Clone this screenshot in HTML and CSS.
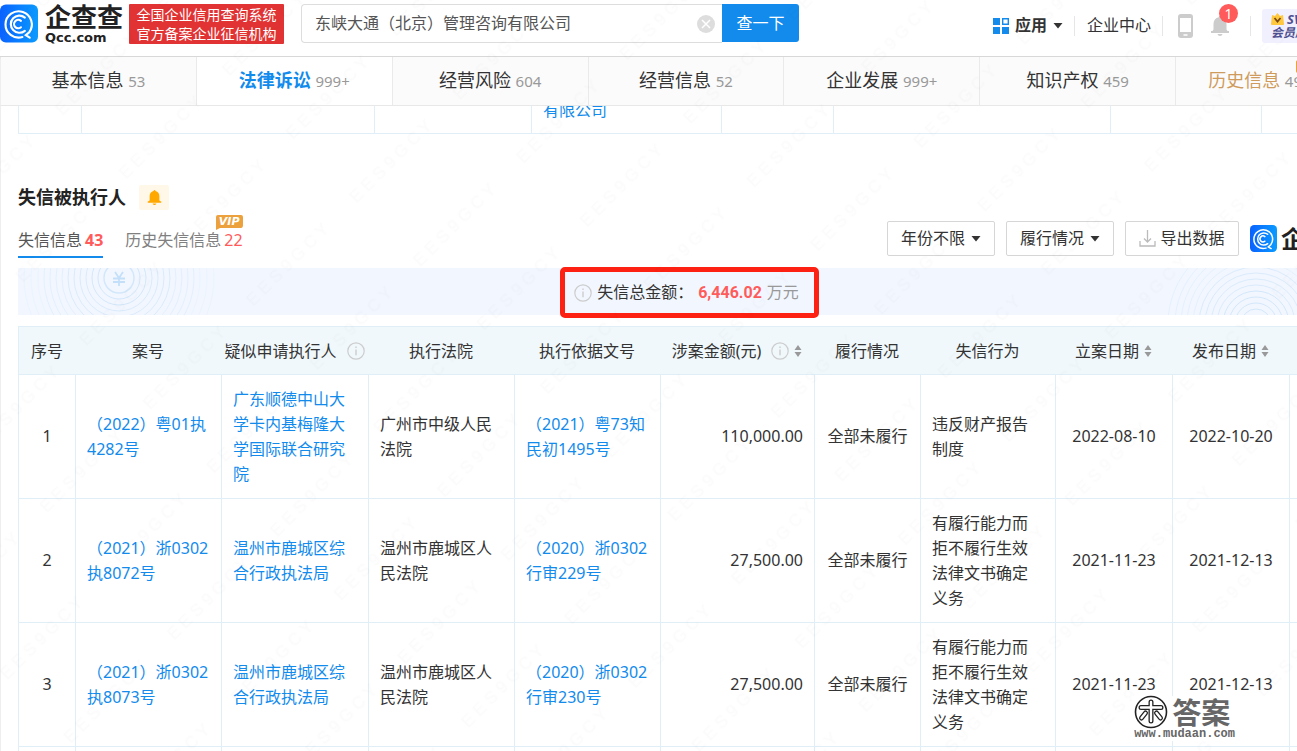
FILE: index.html
```html
<!DOCTYPE html>
<html lang="zh-CN">
<head>
<meta charset="utf-8">
<title>企查查</title>
<link rel="stylesheet" href="styles.css">
</head>
<body>
<svg class="defs" aria-hidden="true">
  <defs>
    <linearGradient id="blue" x1="0" y1="0" x2="1" y2="0"><stop offset="0" stop-color="#0a62ff"/><stop offset="1" stop-color="#0a9bff"/></linearGradient>
    <symbol id="qcc" viewBox="0 0 39 39">
      <rect width="39" height="39" rx="6" fill="url(#blue)"/>
      <g fill="none" stroke="#fff" stroke-width="2.2" stroke-linecap="round">
        <path d="M23 33.400A13.500 13.500 0 1 1 30 28.500L26.500 31.500L30.500 34"/>
        <path d="M25.500 27A8.800 8.800 0 1 1 25.500 13.400"/>
        <path d="M21.500 23.400A4.300 4.300 0 1 1 21.500 16.800"/>
      </g>
    </symbol>
    <symbol id="info" viewBox="0 0 18 18">
      <circle cx="9" cy="9" r="8.2" fill="none" stroke="#ccc" stroke-width="1.2"/>
      <path d="M9 7.5V13.3M9 4.6V6" stroke="#ccc" stroke-width="1.4"/>
    </symbol>
    <symbol id="sort" viewBox="0 0 8 12">
      <path d="M4 0L7.5 5H.5zM4 12L.5 7h7z" fill="#999"/>
    </symbol>
    <symbol id="caret" viewBox="0 0 10 6"><path d="M.5 0h9L5 5.5z" fill="#333"/></symbol>
    <symbol id="bell" viewBox="0 0 20 20">
      <path d="M10 0c.8 0 1.3.5 1.3 1.3C14.500 2 16.500 4.500 16.500 8v5.500l1 1.500H19v2H1v-2h1.500l1-1.500V8c0-3.500 2-6 5.200-6.700C8.700.500 9.200 0 10 0zM7.500 18h5c-.3 1.200-1.200 2-2.500 2s-2.200-.8-2.500-2z" fill="currentColor"/>
    </symbol>
  </defs>
</svg>

<div class="page">
  <header class="top">
    <a class="brand" href="#" aria-label="企查查">
      <svg class="brand-icon"><use href="#qcc"/></svg>
      <span class="brand-text"><b class="brand-name">企查查</b><b class="brand-url">Qcc.com</b></span>
    </a>
    <p class="slogan">全国企业信用查询系统<br>官方备案企业征信机构</p>
    <form class="search">
      <div class="search-box">
        <input class="search-input" type="text" aria-label="搜索企业" value="东峡大通（北京）管理咨询有限公司">
        <button class="clear" type="button" aria-label="清空">
          <svg width="18" height="18" viewBox="0 0 18 18"><circle cx="9" cy="9" r="9" fill="#ddd"/><path d="M5 5l8 8M13 5l-8 8" stroke="#fff" stroke-width="1.500"/></svg>
        </button>
      </div>
      <button class="search-btn" type="button">查一下</button>
    </form>
    <nav class="tools">
      <a class="tool apps" href="#">
        <svg width="16" height="16" viewBox="0 0 16 16"><path d="M0 0h7v7H0zM0 9h7v7H0zM9 9h7v7H9z" fill="#128bed"/><path d="M9.700.700h5.600v5.600H9.700z" fill="none" stroke="#128bed" stroke-width="1.400"/></svg>
        <b>应用</b>
        <svg class="caret"><use href="#caret"/></svg>
      </a>
      <a class="tool center" href="#">企业中心</a>
      <div class="tool icons">
        <a href="#" aria-label="手机版"><svg class="phone" viewBox="0 0 15 24"><rect width="15" height="24" rx="3" fill="#ccc"/><path d="M2 4h11v14H2z" fill="#fff"/><path d="M5.500 21h4" stroke="#fff" stroke-width="1.500"/></svg></a>
        <a class="notice" href="#" aria-label="消息"><svg class="notice-bell"><use href="#bell"/></svg><span class="count">1</span></a>
      </div>
      <a class="svip" href="#">
        <span class="svip-top"><svg width="13" height="12" viewBox="0 0 13 12"><path d="M1 2l3 1 2.500-3L9 3l3-1 1 9q0 1-1 1H1q-1 0-1-1z" fill="#ffc83d"/><path d="M3.500 5L6.500 8.500 9.500 5" fill="none" stroke="#7a4a10" stroke-width="1.800"/></svg>SVIP</span>
        <span>会员服务</span>
      </a>
    </nav>
  </header>

  <nav class="tabs">
    <a class="tab" href="#">基本信息 <span class="num">53</span></a>
    <a class="tab active" href="#">法律诉讼 <span class="num">999+</span></a>
    <a class="tab" href="#">经营风险 <span class="num">604</span></a>
    <a class="tab" href="#">经营信息 <span class="num">52</span></a>
    <a class="tab" href="#">企业发展 <span class="num">999+</span></a>
    <a class="tab" href="#">知识产权 <span class="num">459</span></a>
    <a class="tab history" href="#">历史信息 <span class="num">49</span><i class="flag"></i></a>
  </nav>

  <main class="content">
    <div class="previous">
      <table class="grid">
        <colgroup><col class="p1"><col class="p2"><col class="p3"><col class="p4"><col class="p5"><col class="p6"><col class="p7"><col></colgroup>
        <tbody><tr><td></td><td></td><td></td><td><a href="#">有限公司</a></td><td></td><td></td><td></td><td></td></tr></tbody>
      </table>
    </div>

    <div class="title">
      <h2>失信被执行人</h2>
      <button class="watch" type="button" aria-label="监控"><svg class="watch-bell"><use href="#bell"/></svg></button>
    </div>

    <div class="bar">
      <nav class="subtabs">
        <a class="subtab current" href="#">失信信息<b>43</b></a>
        <a class="subtab" href="#">历史失信信息<em>22</em>
          <span class="vip"><svg class="vip-bg" viewBox="0 0 27 15" preserveAspectRatio="none"><path d="M2 0H25q2 0 2 2V10q0 3-2 3H4L0 15V2q0-2 2-2z" fill="#eda13d"/></svg><span class="vip-text">VIP</span></span>
        </a>
      </nav>
      <div class="filters">
        <button class="filter" type="button">年份不限<svg class="caret"><use href="#caret"/></svg></button>
        <button class="filter" type="button">履行情况<svg class="caret"><use href="#caret"/></svg></button>
        <button class="filter export" type="button"><svg width="17" height="17" viewBox="0 0 17 17" fill="none" stroke="#bbb" stroke-width="1.300"><path d="M8.500 0v12M5 8.500l3.500 3.500L12 8.500M1 11v5h15v-5"/></svg>导出数据</button>
        <span class="mini-brand"><svg class="mini-icon"><use href="#qcc"/></svg><b>企查查</b></span>
      </div>
    </div>

    <div class="banner">
      <svg class="rings left" viewBox="0 0 220 47" fill="none" stroke="#d3e7fb">
        <circle cx="101" cy="10" r="15" stroke-width="1.500"/><circle cx="101" cy="10" r="21"/><circle cx="101" cy="10" r="27"/>
        <g opacity=".75"><circle cx="101" cy="10" r="33"/><circle cx="101" cy="10" r="39"/><circle cx="101" cy="10" r="45"/><circle cx="101" cy="10" r="51"/></g>
        <g opacity=".45"><circle cx="101" cy="10" r="57"/><circle cx="101" cy="10" r="63"/><circle cx="101" cy="10" r="69"/><circle cx="101" cy="10" r="75"/></g>
        <g opacity=".2"><circle cx="101" cy="10" r="81"/><circle cx="101" cy="10" r="88"/><circle cx="101" cy="10" r="95"/></g>
        <path d="M97 4l4 6 4-6M95 10.500h12M95 14h12M101 10v8" stroke="#c3dffa" stroke-width="1.800"/>
      </svg>
      <div class="total"><svg class="info"><use href="#info"/></svg><span>失信总金额：</span><strong>6,446.02</strong><span class="unit">万元</span></div>
      <svg class="rings right" viewBox="0 0 190 47" fill="none" stroke="#d3e7fb">
        <circle cx="92" cy="56" r="15"/><circle cx="92" cy="56" r="21"/><circle cx="92" cy="56" r="27"/><circle cx="92" cy="56" r="33"/>
        <g opacity=".75"><circle cx="92" cy="56" r="39"/><circle cx="92" cy="56" r="45"/><circle cx="92" cy="56" r="51"/><circle cx="92" cy="56" r="57"/></g>
        <g opacity=".4"><circle cx="92" cy="56" r="63"/><circle cx="92" cy="56" r="69"/><circle cx="92" cy="56" r="75"/><circle cx="92" cy="56" r="81"/><circle cx="92" cy="56" r="88"/></g>
      </svg>
    </div>

    <table class="grid records">
      <colgroup><col class="c1"><col class="c2"><col class="c3"><col class="c4"><col class="c5"><col class="c6"><col class="c7"><col class="c8"><col class="c9"><col class="c10"><col></colgroup>
      <thead>
        <tr>
          <th>序号</th><th>案号</th>
          <th><span class="th">疑似申请执行人<svg class="info"><use href="#info"/></svg></span></th>
          <th>执行法院</th><th>执行依据文号</th>
          <th><span class="th">涉案金额(元)<svg class="info"><use href="#info"/></svg><svg class="sort"><use href="#sort"/></svg></span></th>
          <th>履行情况</th><th>失信行为</th>
          <th><span class="th">立案日期<svg class="sort"><use href="#sort"/></svg></span></th>
          <th><span class="th">发布日期<svg class="sort"><use href="#sort"/></svg></span></th>
          <th></th>
        </tr>
      </thead>
      <tbody>
        <tr>
          <td class="mid">1</td><td><a href="#">（2022）粤01执4282号</a></td><td><a href="#">广东顺德中山大学卡内基梅隆大学国际联合研究院</a></td><td>广州市中级人民法院</td><td><a href="#">（2021）粤73知民初1495号</a></td><td class="amount">110,000.00</td><td class="mid">全部未履行</td><td class="conduct">违反财产报告制度</td><td class="mid">2022-08-10</td><td class="mid">2022-10-20</td><td></td>
        </tr>
        <tr>
          <td class="mid">2</td><td><a href="#">（2021）浙0302执8072号</a></td><td><a href="#">温州市鹿城区综合行政执法局</a></td><td>温州市鹿城区人民法院</td><td><a href="#">（2020）浙0302行审229号</a></td><td class="amount">27,500.00</td><td class="mid">全部未履行</td><td class="conduct">有履行能力而拒不履行生效法律文书确定义务</td><td class="mid">2021-11-23</td><td class="mid">2021-12-13</td><td></td>
        </tr>
        <tr>
          <td class="mid">3</td><td><a href="#">（2021）浙0302执8073号</a></td><td><a href="#">温州市鹿城区综合行政执法局</a></td><td>温州市鹿城区人民法院</td><td><a href="#">（2020）浙0302行审230号</a></td><td class="amount">27,500.00</td><td class="mid">全部未履行</td><td class="conduct">有履行能力而拒不履行生效法律文书确定义务</td><td class="mid">2021-11-23</td><td class="mid">2021-12-13</td><td></td>
        </tr>
        <tr><td></td><td></td><td></td><td></td><td></td><td></td><td></td><td></td><td></td><td></td><td></td></tr>
      </tbody>
    </table>
  </main>
</div>

<svg class="watermark" aria-hidden="true">
  <defs>
    <pattern id="wm" width="146" height="90" patternUnits="userSpaceOnUse" patternTransform="translate(341 191) rotate(-45)">
      <text class="wm-text" x="2" y="20">E E S 9 G C Y</text>
    </pattern>
  </defs>
  <rect width="100%" height="100%" fill="url(#wm)"/>
</svg>

<div class="site-mark">
  <div class="mark-row">
    <svg width="34" height="34" viewBox="0 0 34 34" fill="none" stroke="#222" stroke-linecap="round" stroke-linejoin="round">
      <circle cx="17" cy="17" r="15.500" fill="#fff" stroke-width="1.600"/>
      <path d="M7 12.500H27M17 7V26M11.500 18L7.500 23M22.500 18L26.500 23" stroke-width="5"/>
      <path d="M7 12.500H27M17 7V26M11.500 18L7.500 23M22.500 18L26.500 23" stroke="#fff" stroke-width="2.400"/>
    </svg>
    <b>答案</b>
  </div>
  <span class="mark-url">www.mudaan.com</span>
</div>
</body>
</html>
```

FILE: styles.css
```css
* { box-sizing: border-box; }

body {
  position: relative;
  height: 100vh;
  margin: 0;
  overflow: hidden;
  background: #fff;
  color: #333;
  font: 16px/25px "Noto Sans", "Noto Sans CJK SC", sans-serif;
}

a { color: inherit; text-decoration: none; }
button { margin: 0; padding: 0; border: 0; font: inherit; color: inherit; cursor: pointer; }
svg { display: block; flex: none; }
h2, p { margin: 0; }

.defs { position: absolute; width: 0; height: 0; }
.page { min-width: 1372px; }

/* Top bar */
.top {
  position: relative;
  display: flex;
  height: 57px;
  padding: 4px 19px 0 0;
  border-bottom: 1px solid #d8d8d8;
  box-shadow: 0 1px 3px rgba(0, 0, 0, .08);
}
.brand { display: flex; gap: 7px; height: 39px; color: #222; }
.brand-icon { width: 38px; height: 39px; }
.brand-text { display: flex; flex-direction: column; width: 84px; }
.brand-name { font-size: 26px; line-height: 27px; }
.brand-url { font: bold 13px/13px "DejaVu Sans", sans-serif; }
.slogan {
  height: 40px;
  padding: 1px 5px;
  border-radius: 1px;
  background: #e13333;
  color: #fff;
  font-size: 14px;
  line-height: 19px;
  width: 155px;
  text-align: center;
  white-space: nowrap;
}
.search { display: flex; width: 498px; height: 39px; margin-left: 17px; }
.search-box {
  display: flex;
  flex: 1;
  align-items: center;
  padding-right: 7px;
  border: 1px solid #ddd;
  border-right: 0;
  border-radius: 4px 0 0 4px;
}
.search-input {
  flex: 1;
  min-width: 0;
  padding: 0 13px;
  border: 0;
  outline: 0;
  background: none;
  color: #555;
  font: inherit;
}
.clear { background: none; }
.search-btn { width: 77px; height: 38px; border-radius: 0 3px 3px 0; background: #128bed; color: #fff; }
.tools { display: flex; align-items: center; height: 43px; margin-left: auto; }
.tool { display: flex; align-items: center; height: 20px; padding: 0 11px 0 12px; border-right: 1px solid #e6e6e6; }
.apps { gap: 6px; }
.caret { width: 10px; height: 6px; }
.icons { gap: 17px; padding: 0 20px 0 15px; }
.phone { width: 15px; height: 24px; }
.notice { position: relative; color: #ccc; }
.notice-bell { width: 20px; height: 20px; }
.count {
  position: absolute;
  top: -12px;
  left: 9px;
  width: 19px;
  height: 19px;
  border-radius: 50%;
  background: #ff5b5b;
  color: #fff;
  font-size: 14px;
  line-height: 19px;
  text-align: center;
}
.svip {
  display: flex;
  flex-direction: column;
  width: 91px;
  height: 34px;
  margin-left: 11px;
  padding: 3px 9px;
  border-radius: 3px 0 0 3px;
  background: #f1f0fe;
  color: #4e4f91;
  font-size: 12px;
  font-style: italic;
  font-weight: bold;
  line-height: 14px;
}
.svip-top { display: flex; align-items: center; gap: 3px; font-size: 13px; }

/* Category tabs */
.tabs {
  display: grid;
  grid-template-columns: repeat(7, 1fr);
  height: 49px;
  border-bottom: 1px solid #e8e8e8;
  border-left: 1px solid #eee;
}
.tab {
  position: relative;
  border-right: 1px solid #eaeaea;
  background: #fbfbfb;
  font-size: 18px;
  line-height: 47px;
  text-align: center;
}
.num { color: #999; font-size: 15px; font-weight: normal; }
.active { background: #fff; color: #128bed; font-weight: bold; }
.history { padding-left: 32px; color: #cf9b5c; text-align: left; }
.flag { position: absolute; top: 3px; left: 120px; width: 27px; height: 13px; border-radius: 2px; background: #eda13d; }

/* Content */
.content { padding: 0 18px 0 17px; border-left: 1px solid #eee; }
.grid { width: 100%; table-layout: fixed; border-spacing: 0; }
.grid td { padding: 12px 11px 11px; border-top: 1px solid #e0eef8; border-left: 1px solid #e0eef8; }
.grid a { color: #128bed; }
.previous { display: flex; align-items: flex-end; height: 28px; overflow: hidden; }
.previous td { height: 48px; padding: 11px 11px 10px; border-bottom: 1px solid #e0eef8; }
.p1 { width: 63px; }
.p2 { width: 293px; }
.p3 { width: 157px; }
.p4 { width: 190px; }
.p5 { width: 112px; }
.p6 { width: 277px; }
.p7 { width: 151px; }

.title { display: flex; align-items: center; gap: 13px; margin-top: 51px; }
.title h2 { font-size: 18px; line-height: 25px; color: #222; }
.watch { display: grid; place-items: center; width: 30px; height: 25px; border-radius: 2px; background: #fff8e9; color: #ffa800; }
.watch-bell { width: 15px; height: 15px; }

.bar { display: flex; justify-content: space-between; height: 47px; margin-top: 11px; }
.subtabs { display: flex; gap: 22px; padding-top: 7px; }
.subtab { position: relative; height: 30px; color: #808080; white-space: nowrap; }
.subtab b, .subtab em { padding-left: 3px; color: #ff5b5b; font-style: normal; }
.current { border-bottom: 2px solid #128bed; color: #555; }
.vip { position: absolute; top: -13px; right: 0; width: 27px; height: 15px; }
.vip-bg { width: 27px; height: 15px; }
.vip-text { position: absolute; inset: 0; color: #fff; font: italic bold 11px/13px "DejaVu Sans", sans-serif; text-align: center; }
.filters { display: flex; gap: 11px; }
.filter {
  display: flex;
  align-items: center;
  justify-content: center;
  gap: 6px;
  width: 108px;
  height: 35px;
  border: 1px solid #d6d6d6;
  border-radius: 2px;
  background: #fff;
}
.export { gap: 4px; width: 114px; }
.mini-brand { display: flex; align-items: center; gap: 4px; width: 104px; height: 35px; color: #222; font-size: 24px; white-space: nowrap; }
.mini-icon { width: 27px; height: 27px; }

.banner { position: relative; display: flex; align-items: center; justify-content: center; height: 47px; background: #f2f7ff; }
.rings { position: absolute; top: 0; height: 47px; }
.left { left: 0; width: 220px; }
.right { right: 0; width: 190px; }
.total {
  position: relative;
  display: flex;
  align-items: center;
  height: 51px;
  margin: 2px 0 0 7px;
  padding: 0 15px 0 9px;
  border: 5px solid #fd2113;
  border-radius: 5px;
  white-space: nowrap;
}
.info { width: 18px; height: 18px; }
.total .info { margin-right: 5px; }
.total strong { margin: 0 5px; color: #ff5b5b; font-family: Roboto, sans-serif; }
.unit { color: #999; }

.records { margin-top: 11px; }
.records th { height: 48px; padding: 1px 0 0; border-top: 1px solid #e0eef8; background: #f0f8fc; font-weight: normal; white-space: nowrap; }
.records th:first-child { border-left: 1px solid #e0eef8; }
.th { display: flex; align-items: center; justify-content: center; gap: 5px; }
.th .info { margin-left: 5px; }
.sort { width: 8px; height: 12px; }
.records .mid { padding: 11px 0 12px; text-align: center; }
.records .amount { padding-top: 11px; padding-bottom: 12px; text-align: right; }
.records .conduct { padding-right: 20px; }
.c1 { width: 57px; }
.c2, .c4, .c5 { width: 146px; }
.c3 { width: 147px; }
.c6 { width: 154px; }
.c7 { width: 106px; }
.c8 { width: 135px; }
.c9, .c10 { width: 117px; }

/* Overlays */
.watermark { position: absolute; inset: 0; width: 100%; height: 100%; opacity: .012; pointer-events: none; }
.wm-text { font: 17px "Liberation Sans", sans-serif; fill: #000; }
.site-mark { position: absolute; right: 60px; bottom: 10px; padding: 0 2px; background: rgba(255, 255, 255, .9); color: #666; }
.mark-row { display: flex; align-items: center; gap: 4px; height: 32px; font-size: 29px; }
.mark-url { display: block; font: bold 12px/13px "Liberation Mono", monospace; }
```
